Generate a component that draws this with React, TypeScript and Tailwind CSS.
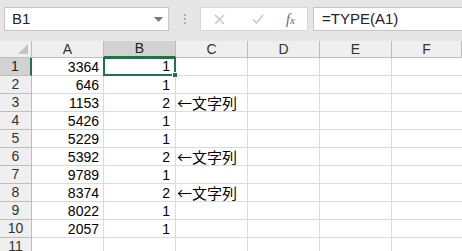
const COLS = ["A", "B", "C", "D", "E", "F"];

const ROWS: { a?: string; b?: string; note?: string }[] = [
  { a: "3364", b: "1" },
  { a: "646", b: "1" },
  { a: "1153", b: "2", note: "←文字列" },
  { a: "5426", b: "1" },
  { a: "5229", b: "1" },
  { a: "5392", b: "2", note: "←文字列" },
  { a: "9789", b: "1" },
  { a: "8374", b: "2", note: "←文字列" },
  { a: "8022", b: "1" },
  { a: "2057", b: "1" },
  {},
];

const FormulaBar = () => (
  <div className="flex h-[41px] items-start bg-[#e6e6e6] pl-[4px] pt-[7px]">
    {/* name box */}
    <div className="flex h-[24px] w-[165px] items-center justify-between border border-[#c6c6c6] bg-white pl-[7px] pr-[5px] text-[15px] text-[#222]">
      <span>B1</span>
      <svg width="9" height="5" viewBox="0 0 9 5">
        <path d="M0 0h9L4.5 5z" fill="#777" />
      </svg>
    </div>
    <div className="flex h-[24px] w-[31px] flex-col items-center justify-center gap-[2px]">
      <span className="h-[2px] w-[2px] bg-[#b0b0b0]" />
      <span className="h-[2px] w-[2px] bg-[#b0b0b0]" />
      <span className="h-[2px] w-[2px] bg-[#b0b0b0]" />
    </div>
    {/* cancel / enter / fx */}
    <div className="flex h-[24px] w-[108px] items-center border border-[#d6d6d6] bg-white">
      <svg className="ml-[13px]" width="11" height="11" viewBox="0 0 11 11">
        <path d="M1 1l9 9M10 1l-9 9" stroke="#c4c4c4" strokeWidth="1.3" />
      </svg>
      <svg className="ml-[27px]" width="12" height="10" viewBox="0 0 12 10">
        <path d="M1 5.5l3.5 3.5L11 1" stroke="#c4c4c4" strokeWidth="1.3" fill="none" />
      </svg>
      <span className="ml-[22px] font-['Liberation_Serif'] text-[14px] italic text-[#666]">
        f<span className="text-[11px]">x</span>
      </span>
    </div>
    {/* formula input */}
    <div className="ml-[5px] flex h-[24px] flex-1 items-center border border-r-0 border-[#c6c6c6] bg-white pl-[8px] text-[15px] text-[#222]">
      =TYPE(A1)
    </div>
  </div>
);

export default function App() {
  return (
    <div className="h-[251px] w-[462px] overflow-hidden bg-white font-['Liberation_Sans','Noto_Sans_CJK_JP',sans-serif]">
      <FormulaBar />
      <div className="grid grid-cols-[32px_72px_72px_72px_72px_72px_1fr]">
        {/* select-all corner */}
        <div className="flex h-[17px] items-end justify-end border-r border-b border-[#bdbdbd] bg-[#efefef] pr-[3px] pb-[3px]">
          <svg width="10" height="10" viewBox="0 0 10 10">
            <path d="M10 0v10H0z" fill="#c4c4c4" />
          </svg>
        </div>
        {COLS.map((c) => (
          <div
            key={c}
            className={
              c === "B"
                ? "flex h-[17px] items-center justify-center border-r border-b-2 border-r-[#bdbdbd] border-b-[#217346] bg-[#d2d2d2] text-[14px] text-[#222]"
                : "flex h-[17px] items-center justify-center border-r border-b border-[#bdbdbd] bg-[#efefef] text-[14px] text-[#333]"
            }
          >
            {c}
          </div>
        ))}

        {ROWS.map((r, i) => (
          <Row key={i} n={i + 1} {...r} />
        ))}
      </div>
    </div>
  );
}

const Row = ({ n, a, b, note }: { n: number; a?: string; b?: string; note?: string }) => {
  const cell = "h-[18px] border-r border-b border-[#dadada] text-[14px] leading-[18px] text-black";
  const active = n === 1;
  return (
    <>
      <div
        className={
          active
            ? "flex h-[18px] items-center justify-center border-r-2 border-b border-r-[#217346] border-b-[#bdbdbd] bg-[#d2d2d2] text-[14px] text-[#222]"
            : "flex h-[18px] items-center justify-center border-r border-b border-[#bdbdbd] bg-[#efefef] text-[14px] text-[#333]"
        }
      >
        {n}
      </div>
      <div className={cell + " pr-[4px] text-right"}>{a}</div>
      {active ? (
        <div className="relative z-10 -mt-[1px] -ml-[1px] h-[19px] border-2 border-[#217346] pr-[4px] text-right text-[14px] leading-[15px] text-black">
          {b}
          <span className="absolute -right-[4px] -bottom-[4px] h-[6px] w-[6px] border border-white bg-[#217346]" />
        </div>
      ) : (
        <div className={cell + " pr-[5px] text-right"}>{b}</div>
      )}
      <div className={cell + " relative overflow-visible"}>
        {note && (
          <span className="absolute left-[1px] top-0 whitespace-nowrap font-['Noto_Sans_CJK_JP',sans-serif] text-[15px] leading-[18px]">
            {note}
          </span>
        )}
      </div>
      <div className={cell} />
      <div className={cell} />
      <div className="h-[18px] border-b border-[#dadada]" />
    </>
  );
};
